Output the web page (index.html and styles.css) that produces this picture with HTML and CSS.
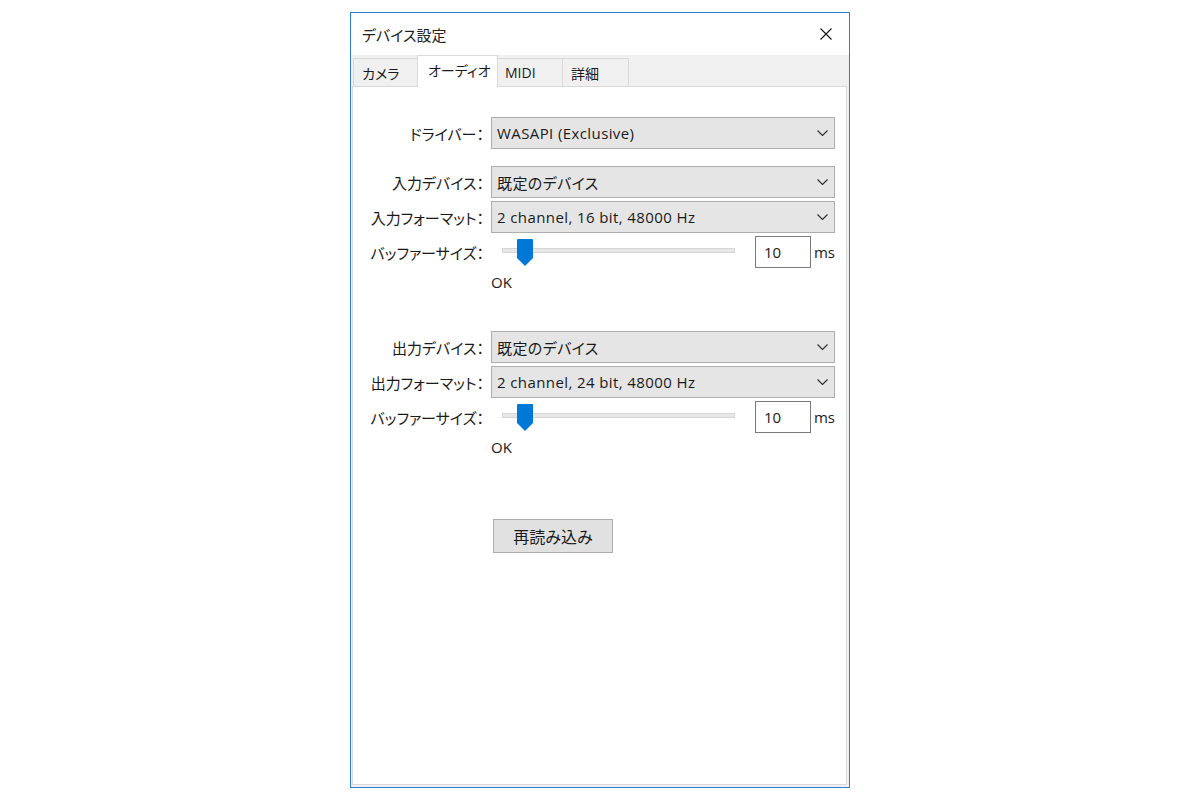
FILE: index.html
```html
<!DOCTYPE html>
<html>
  <head>
    <title>デバイス設定</title>
    <link rel="stylesheet" href="styles.css">
  </head>
  <body>
    <div class="window">
      <div class="titlebar">
        <span class="title">デバイス設定</span>
        <span class="close">
          <svg width="12" height="12" viewBox="0 0 12 12">
            <path d="M0.5 0.5 L11.5 11.5 M11.5 0.5 L0.5 11.5" stroke="#111" stroke-width="1.1" fill="none" />
          </svg>
        </span>
      </div>

      <div class="tabctl">
        <div class="tabs">
          <div class="tab">カメラ</div>
          <div class="tab active">オーディオ</div>
          <div class="tab">MIDI</div>
          <div class="tab">詳細</div>
        </div>

        <div class="panel">
          <div class="row">
            <span class="label">ドライバー：</span>
            <div class="select">
              <span>WASAPI (Exclusive)</span>
              <svg class="chev" width="11" height="6" viewBox="0 0 11 6"><polyline points="0.5,0.5 5.5,5.5 10.5,0.5" /></svg>
            </div>
          </div>

          <!-- input -->
          <div class="row group">
            <span class="label">入力デバイス：</span>
            <div class="select">
              <span>既定のデバイス</span>
              <svg class="chev" width="11" height="6" viewBox="0 0 11 6"><polyline points="0.5,0.5 5.5,5.5 10.5,0.5" /></svg>
            </div>
          </div>
          <div class="row">
            <span class="label">入力フォーマット：</span>
            <div class="select">
              <span>2 channel, 16 bit, 48000 Hz</span>
              <svg class="chev" width="11" height="6" viewBox="0 0 11 6"><polyline points="0.5,0.5 5.5,5.5 10.5,0.5" /></svg>
            </div>
          </div>
          <div class="row">
            <span class="label">バッファーサイズ：</span>
            <div class="slider">
              <div class="track">
                <svg class="thumb" width="16" height="27" viewBox="0 0 16 27"><path d="M1 0 H15 Q16 0 16 1 V19 L8 27 L0 19 V1 Q0 0 1 0 Z" /></svg>
              </div>
            </div>
            <div class="numbox">10</div>
            <span class="unit">ms</span>
          </div>
          <div class="status">OK</div>

          <!-- output -->
          <div class="row group-out">
            <span class="label">出力デバイス：</span>
            <div class="select">
              <span>既定のデバイス</span>
              <svg class="chev" width="11" height="6" viewBox="0 0 11 6"><polyline points="0.5,0.5 5.5,5.5 10.5,0.5" /></svg>
            </div>
          </div>
          <div class="row">
            <span class="label">出力フォーマット：</span>
            <div class="select">
              <span>2 channel, 24 bit, 48000 Hz</span>
              <svg class="chev" width="11" height="6" viewBox="0 0 11 6"><polyline points="0.5,0.5 5.5,5.5 10.5,0.5" /></svg>
            </div>
          </div>
          <div class="row">
            <span class="label">バッファーサイズ：</span>
            <div class="slider">
              <div class="track">
                <svg class="thumb" width="16" height="27" viewBox="0 0 16 27"><path d="M1 0 H15 Q16 0 16 1 V19 L8 27 L0 19 V1 Q0 0 1 0 Z" /></svg>
              </div>
            </div>
            <div class="numbox">10</div>
            <span class="unit">ms</span>
          </div>
          <div class="status">OK</div>

          <div class="actions">
            <button class="btn">再読み込み</button>
          </div>
        </div>
      </div>
    </div>
  </body>
</html>
```

FILE: styles.css
```css
body {
  margin: 0;
  background-color: #ffffff;
  font-family: "Open Sans", "Noto Sans CJK JP", sans-serif;
  font-feature-settings: "palt";
  color: #1a1a1a;
}
.window {
  width: 498px;
  height: 774px;
  margin: 12px auto 0;
  border: 1px solid #2a7fd4;
  background-color: #f0f0f0;
  display: flex;
  flex-direction: column;
}
.titlebar {
  height: 42px;
  background-color: #ffffff;
  display: flex;
  align-items: center;
  justify-content: space-between;
  padding-left: 11px;
}
.title {
  font-size: 15px;
  color: #222;
}
.close {
  width: 46px;
  height: 42px;
  display: flex;
  align-items: center;
  justify-content: center;
}
.tabctl {
  flex: 1;
  display: flex;
  flex-direction: column;
  padding: 0 2px 2px 1px;
}
.tabs {
  height: 31px;
  display: flex;
  align-items: flex-end;
  padding-left: 1px;
}
.tab {
  width: 67px;
  height: 28px;
  box-sizing: border-box;
  padding: 0 8px;
  border: 1px solid #d9d9d9;
  border-bottom: none;
  background-color: #f0f0f0;
  font-size: 14px;
  white-space: nowrap;
  display: flex;
  align-items: center;
  margin-right: -1px;
}
.tab.active {
  width: 81px;
  height: 32px;
  margin: 0 -2px -1px;
  padding: 4px 8px 0 10px;
  background-color: #ffffff;
  position: relative;
  z-index: 1;
  align-items: flex-start;
}
.panel {
  flex: 1;
  background-color: #ffffff;
  border: 1px solid #d9d9d9;
  padding: 30px 11px 0 0;
}
.row {
  display: flex;
  align-items: center;
  margin-top: 3px;
}
.row:first-child {
  margin-top: 0;
}
.row.group {
  margin-top: 17px;
}
.row.group-out {
  margin-top: 39px;
}
.label {
  width: 131px;
  margin-right: 7px;
  text-align: right;
  font-size: 15px;
  white-space: nowrap;
}
.select {
  flex: 1;
  height: 30px;
  border: 1px solid #adadad;
  background-color: #e5e5e5;
  display: flex;
  align-items: center;
  justify-content: space-between;
  padding: 0 6px 0 5px;
  font-size: 15px;
  letter-spacing: 0.4px;
}
.chev {
  fill: none;
  stroke: #333;
  stroke-width: 1.2;
}
.slider {
  width: 254px;
  height: 32px;
  display: flex;
  align-items: center;
}
.track {
  width: 231px;
  height: 3px;
  margin-left: 11px;
  margin-top: -4px;
  background-color: #e7e7e7;
  border: 1px solid #d6d6d6;
  position: relative;
}
.thumb {
  position: absolute;
  left: 14px;
  top: -10px;
  fill: #0078d7;
}
.numbox {
  width: 46px;
  height: 30px;
  margin-left: 10px;
  padding-left: 8px;
  border: 1px solid #7a7a7a;
  display: flex;
  align-items: center;
  font-size: 15px;
}
.unit {
  margin-left: 3px;
  font-size: 15px;
}
.status {
  margin: 4px 0 0 138px;
  line-height: 20px;
  font-size: 15px;
}
.actions {
  margin: 62px 0 0 140px;
}
.btn {
  width: 120px;
  height: 34px;
  border: 1px solid #adadad;
  background-color: #e1e1e1;
  font-family: "Open Sans", "Noto Sans CJK JP", sans-serif;
  font-feature-settings: "palt";
  font-size: 16px;
  color: #1a1a1a;
  padding: 0;
}
```
